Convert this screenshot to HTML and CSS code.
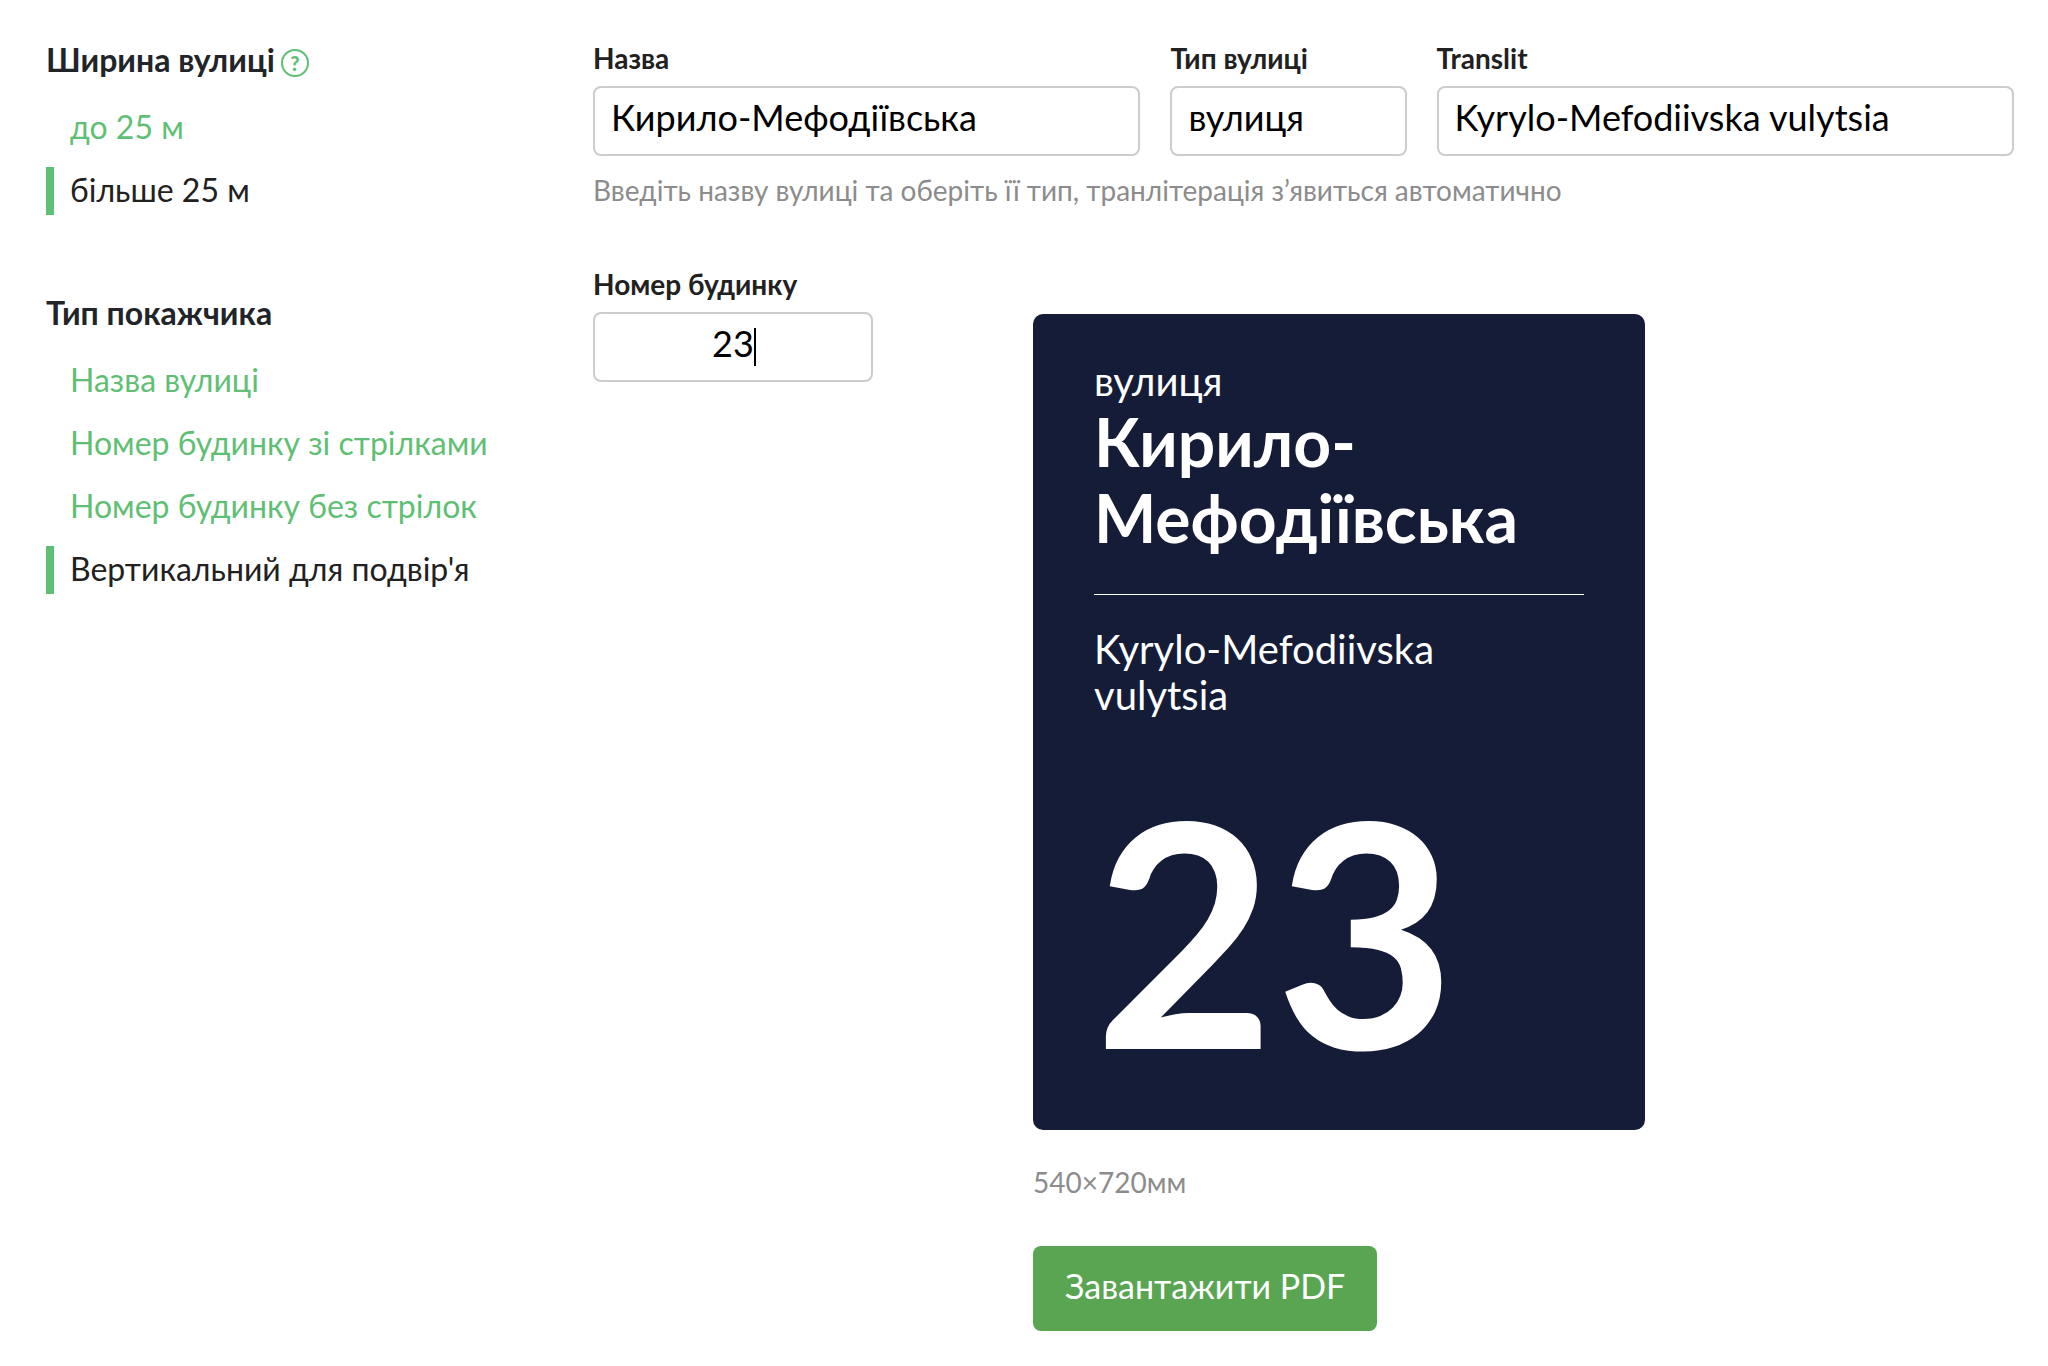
FILE: index.html
```html
<!DOCTYPE html>
<html lang="uk">
<head>
    <meta charset="UTF-8">
    <meta name="viewport" content="width=device-width, initial-scale=1.0">
    <title>Вуличні покажчики</title>
    <link rel="stylesheet" href="styles.css">
</head>
<body>

<div class="page">
    <aside class="sidebar">
        <section class="group">
            <h2>Ширина вулиці <a class="help" href="#help">?</a></h2>
            <ul class="menu">
                <li><a href="#narrow">до 25 м</a></li>
                <li><a class="active" href="#wide">більше 25 м</a></li>
            </ul>
        </section>
        <section class="group">
            <h2>Тип покажчика</h2>
            <ul class="menu">
                <li><a href="#name">Назва вулиці</a></li>
                <li><a href="#arrows">Номер будинку зі стрілками</a></li>
                <li><a href="#no-arrows">Номер будинку без стрілок</a></li>
                <li><a class="active" href="#vertical">Вертикальний для подвір'я</a></li>
            </ul>
        </section>
    </aside>

    <main class="main">
        <div class="fields">
            <div class="field">
                <label for="street">Назва</label>
                <input type="text" id="street" value="Кирило-Мефодіївська">
            </div>
            <div class="field">
                <label for="kind">Тип вулиці</label>
                <select id="kind">
                    <option>вулиця</option>
                </select>
            </div>
            <div class="field">
                <label for="translit">Translit</label>
                <input type="text" id="translit" value="Kyrylo-Mefodiivska vulytsia">
            </div>
        </div>
        <p class="hint">Введіть назву вулиці та оберіть її тип, транлітерація з’явиться автоматично</p>

        <div class="workspace">
            <div class="field number">
                <label for="number">Номер будинку</label>
                <div class="number-box">
                    <input type="text" id="number" value="23">
                    <span class="caret"></span>
                </div>
            </div>

            <div class="preview">
                <div class="sign">
                    <div class="sign-kind">вулиця</div>
                    <div class="sign-name">Кирило-Мефодіївська</div>
                    <div class="sign-translit">Kyrylo-Mefodiivska<br>vulytsia</div>
                    <div class="sign-number">23</div>
                </div>
                <p class="size">540×720мм</p>
                <button class="download" type="button">Завантажити PDF</button>
            </div>
        </div>
    </main>
</div>

</body>
</html>
```
FILE: styles.css
```css
* {
    box-sizing: border-box;
}
body {
    margin: 0;
    font-family: Lato, "Open Sans", sans-serif;
    font-size: 32px;
    color: #212121;
    background: #fff;
}
.page {
    display: grid;
    grid-template-columns: 507px 1fr;
    gap: 40px;
    padding: 40px 34px 34px 46px;
}
h2 {
    display: flex;
    align-items: center;
    gap: 6px;
    margin: 0 0 24px;
    font-size: 32px;
    line-height: 40px;
    font-weight: 700;
    color: #212529;
}
.group {
    margin-bottom: 78px;
}
.help {
    width: 28px;
    height: 28px;
    margin-top: 6px;
    border: 2px solid #5fc075;
    border-radius: 50%;
    font-size: 20px;
    line-height: 24px;
    font-weight: 900;
    text-align: center;
    text-decoration: none;
    color: #5fc075;
}
.menu {
    display: flex;
    flex-direction: column;
    gap: 15px;
    margin: 0;
    padding: 0;
    list-style: none;
}
.menu a {
    display: block;
    border-left: 8px solid transparent;
    padding: 0 0 2px 16px;
    line-height: 46px;
    text-decoration: none;
    color: #5fc075;
}
.menu a.active {
    border-color: #5fc075;
    color: #212121;
}
.fields {
    display: grid;
    grid-template-columns: 547fr 236fr 577fr;
    gap: 30px;
}
label {
    display: block;
    margin-bottom: 10px;
    font-size: 28px;
    line-height: 36px;
    font-weight: 700;
}
input, select {
    display: block;
    width: 100%;
    height: 70px;
    padding: 0 16px 8px;
    border: 2px solid #ccc;
    border-radius: 8px;
    background: #fff;
    font-family: inherit;
    font-size: 36px;
    color: #000;
    appearance: none;
}
.hint, .size {
    margin: 0;
    font-size: 28px;
    line-height: 36px;
    color: #8c8c8c;
}
.hint {
    margin-top: 16px;
}
.workspace {
    display: grid;
    grid-template-columns: 280px 1fr;
    gap: 160px;
    margin-top: 58px;
}
.number-box {
    position: relative;
}
.number input {
    text-align: center;
}
.caret {
    position: absolute;
    top: 16px;
    left: 161px;
    width: 2px;
    height: 38px;
    background: #000;
}
.preview {
    padding-top: 48px;
}
.sign {
    display: flex;
    flex-direction: column;
    width: 612px;
    aspect-ratio: 540 / 720;
    padding: 44px 61px 52px;
    border-radius: 10px;
    background: #151c37;
    color: #fff;
}
.sign-kind, .sign-translit {
    font-size: 40px;
    line-height: 46px;
}
.sign-name {
    padding-bottom: 38px;
    border-bottom: 1px solid #fff;
    font-size: 66px;
    line-height: 76px;
    font-weight: 700;
}
.sign-translit {
    margin-top: 31px;
}
.sign-number {
    margin-top: auto;
    font-size: 312px;
    line-height: 300px;
    font-weight: 700;
}
.size {
    margin: 34px 0 46px;
}
.download {
    padding: 18px 32px 23px;
    border: none;
    border-radius: 8px;
    background: #59a552;
    font-family: inherit;
    font-size: 34px;
    line-height: 44px;
    color: #fff;
    cursor: pointer;
}
```
